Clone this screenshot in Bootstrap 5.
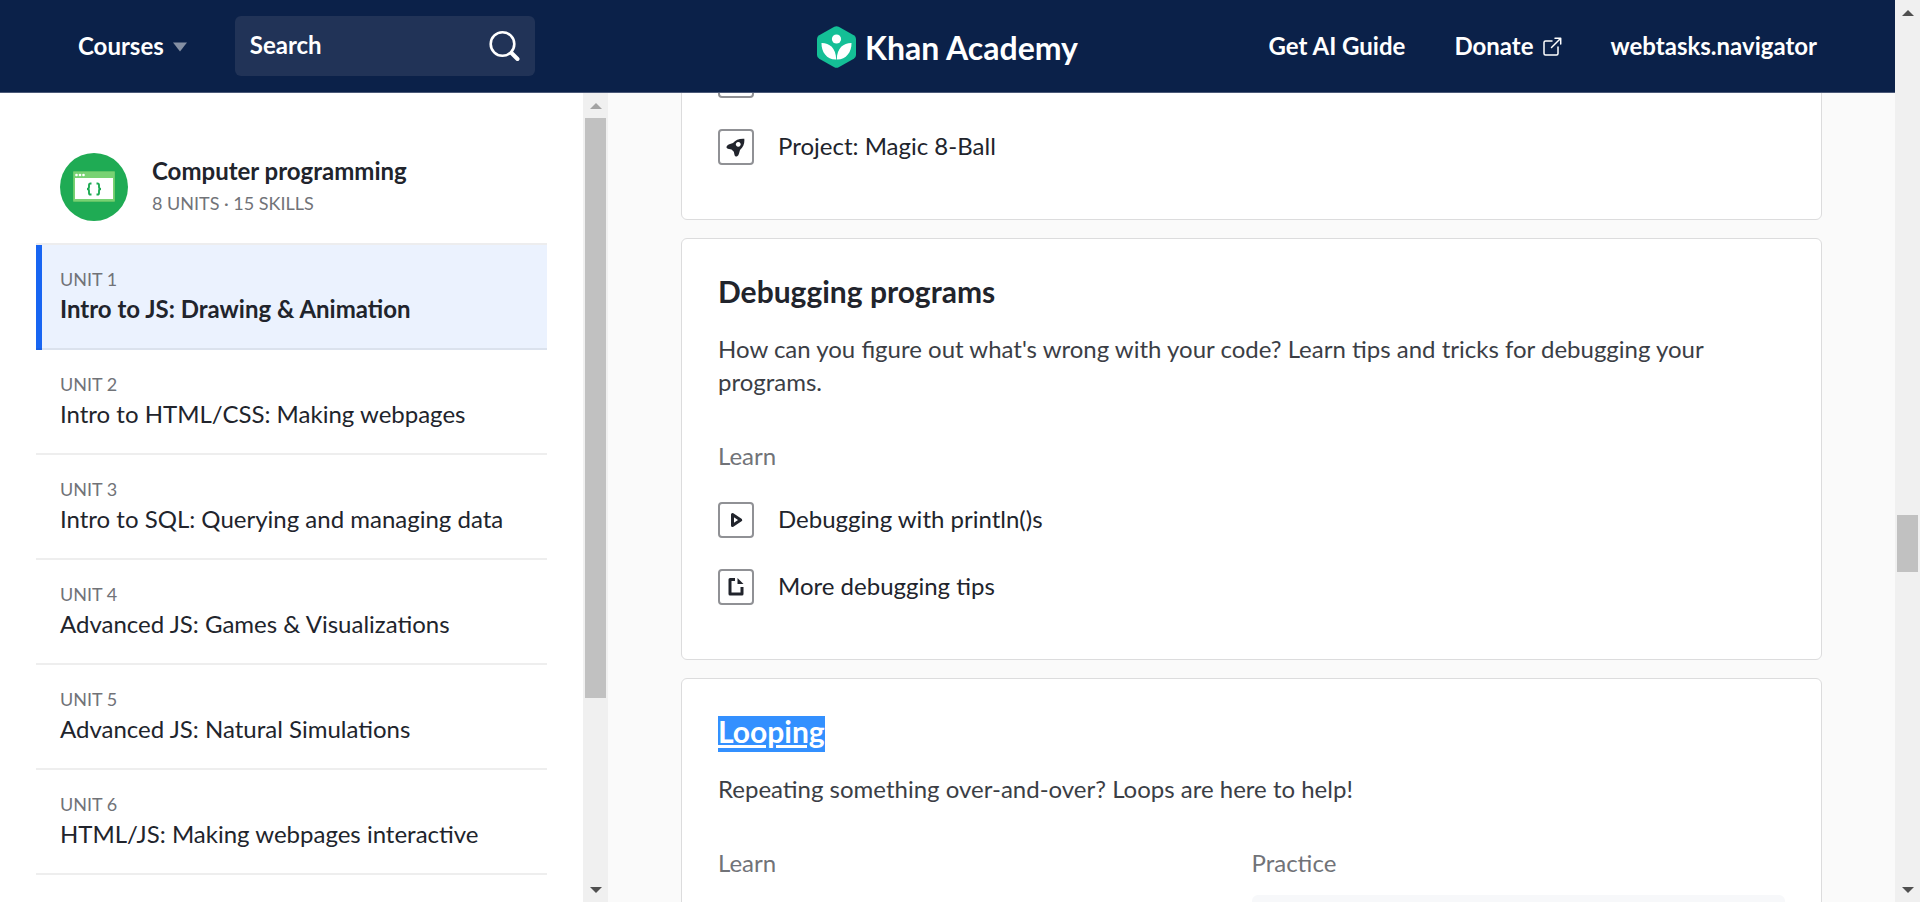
<!DOCTYPE html>
<html lang="en">
<head>
<meta charset="utf-8">
<meta name="viewport" content="width=device-width, initial-scale=1">
<title>Computer programming | Khan Academy</title>
<link href="https://cdn.jsdelivr.net/npm/bootstrap@5.3.0/dist/css/bootstrap.min.css" rel="stylesheet">
<style>
:root { --ink: #21242c; --soft: #717378; --navy: #0b2149; --line: #dcdcdd; }
body { font-family: Lato, "Noto Sans", sans-serif; font-size: 24px; line-height: 33px; color: var(--ink); background: #fafafa; }
a { color: inherit; text-decoration: none; }

/* top bar */
.topbar { background: var(--navy); border-bottom: 1px solid #4b5978; height: 93px; padding: 0 78px; color: #fff; font-weight: 700; }
.topbar .side { flex: 1 1 0; }
.courses-btn { background: none; border: 0; padding: 0 0 2px; color: inherit; font-weight: 700; }
.search-box { background: #213357; border-radius: 6px; width: 300px; height: 60px; padding: 0 15px; margin-left: 47px; }
.search-box input { background: none; border: 0; outline: 0; color: #fff; font-weight: 700; min-width: 0; padding: 0 0 4px; }
.search-box input::placeholder { color: #fff; opacity: 1; }
.search-box button { background: none; border: 0; padding: 0; line-height: 0; }
.brand { font-size: 32px; gap: 9px; padding-top: 2px; }
.links { gap: 49px; padding-bottom: 2px; }

/* sidebar */
.sidebar { width: 583px; background: #fff; padding: 60px 36px 0; }
.course-head { padding: 0 24px 22px; gap: 24px; }
.course-text { padding-top: 3px; }
.course-name { font-weight: 700; line-height: 30px; }
.meta-text { font-size: 18px; line-height: 24px; color: var(--soft); }
.course-head .meta-text { margin-top: 5px; }
.units { border-top: 2px solid #ededee; }
.unit { display: block; height: 105px; padding: 22px 24px 0; border-bottom: 2px solid rgba(33, 36, 44, .08); }
.unit-name { line-height: 36px; }
.unit.current { background: linear-gradient(to right, #1865f2 6px, #ebf2fe 6px) border-box; }
.unit.current .unit-name { font-weight: 700; }

/* scroll tracks */
.track { width: 25px; background: #f0f0f0; }
.track .arrow { height: 25px; }
.track .thumb { background: #c1c1c1; margin: 0 2px; }

/* lessons */
.lessons { padding: 0 73px; }
.lesson { border: 1px solid var(--line); border-radius: 6px; background: #fff; padding: 34px 36px 37px; margin-bottom: 18px; }
.lesson.scrolled { margin-top: -80px; }
.lesson h2 { font-size: 30px; line-height: 36px; font-weight: 700; margin: 0 0 23px; }
.lesson p { margin: 0 0 41px; color: #3b3e45; }
.lesson h3 { font-size: 24px; line-height: 33px; font-weight: 400; color: var(--soft); margin: 0 0 16px; }
.item { height: 67px; gap: 24px; padding-bottom: 4px; }
.item-icon { width: 36px; height: 36px; border: 2px solid #909195; border-radius: 4px; }
.item-name { padding-bottom: 3px; }
.picked { background: linear-gradient(transparent 3px, #3390ff 3px); padding-bottom: 3px; color: #fff; text-decoration: underline; text-decoration-thickness: 3px; }
.practice-box { background: #f7f8fa; border-radius: 6px; height: 120px; }
</style>
</head>
<body class="vh-100 overflow-hidden d-flex">
<div class="flex-grow-1 d-flex flex-column" style="min-width:0">
  <header class="topbar d-flex align-items-center flex-shrink-0">
    <div class="side d-flex align-items-center">
      <button class="courses-btn d-flex align-items-center" type="button">Courses
        <svg class="ms-2 mt-1" width="16" height="10" viewBox="0 0 16 10" aria-hidden="true"><path d="M1 0.5h14L8 9.5z" fill="#8590a4"/></svg>
      </button>
      <form class="search-box d-flex align-items-center" role="search">
        <input class="flex-grow-1" type="text" placeholder="Search" aria-label="Search">
        <button type="button" aria-label="Submit search">
          <svg width="32" height="32" viewBox="0 0 32 32" fill="none" stroke="#fff" stroke-linecap="round"><circle cx="14.500" cy="14" r="11.800" stroke-width="2.600"/><path d="M23.500 23l6 6" stroke-width="4"/></svg>
        </button>
      </form>
    </div>
    <a class="brand d-flex align-items-center" href="#">
      <svg width="39" height="42" viewBox="0 0 39 42" aria-hidden="true">
        <path d="M17.300.800Q19.500-.400 21.700.800L36.800 9.300Q39 10.600 39 13V29Q39 31.400 36.800 32.700L21.700 41.200Q19.500 42.400 17.300 41.200L2.200 32.700Q0 31.400 0 29V13Q0 10.600 2.200 9.300z" fill="#14bf96"/>
        <circle cx="19.500" cy="13" r="4.600" fill="#fff"/>
        <path d="M4.500 17C12 16.800 19.100 21.500 19.200 33.600 10 33.900 4.200 26 4.500 17zM34.500 17C27 16.800 19.900 21.500 19.800 33.600 29 33.900 34.800 26 34.500 17z" fill="#fff"/>
      </svg>
      <span>Khan Academy</span>
    </a>
    <nav class="side links d-flex align-items-center justify-content-end">
      <a href="#">Get AI Guide</a>
      <a class="d-flex align-items-center" href="#">Donate
        <svg class="ms-2 mt-1" width="20" height="20" viewBox="0 0 20 20" fill="none" stroke="#fff" stroke-width="1.500" stroke-linecap="round" stroke-linejoin="round" aria-hidden="true"><path d="M10 4H3.500Q2 4 2 5.500v11Q2 18 3.500 18h11q1.500 0 1.500-1.500V10M9.500 10.500L18.500 1.500M13 1.300h5.700V7"/></svg>
      </a>
      <a href="#">webtasks.navigator</a>
    </nav>
  </header>

  <div class="flex-grow-1 d-flex overflow-hidden">
    <aside class="sidebar flex-shrink-0 overflow-hidden">
      <a class="course-head d-flex" href="#">
        <svg width="68" height="68" viewBox="0 0 68 68" aria-hidden="true">
          <circle cx="34" cy="34" r="34" fill="#1fab54"/>
          <rect x="13" y="18" width="42" height="31" rx="1" fill="#5fc465"/>
          <rect x="13.500" y="19" width="41" height="29" fill="#78d273"/>
          <rect x="15" y="25" width="38" height="21" fill="#fff"/>
          <g fill="#fff"><circle cx="16.500" cy="22" r="1.300"/><circle cx="20" cy="22" r="1.300"/><circle cx="23.500" cy="22" r="1.300"/></g>
          <g fill="none" stroke="#1fab54" stroke-width="1.900"><path d="M31.500 30.500h-1q-1.500 0-1.500 1.600v2q0 1.900-2 1.900 2 0 2 1.900v2q0 1.600 1.500 1.600h1M36.500 30.500h1q1.500 0 1.500 1.600v2q0 1.900 2 1.900-2 0-2 1.900v2q0 1.600-1.500 1.600h-1"/></g>
        </svg>
        <span class="course-text d-flex flex-column">
          <span class="course-name">Computer programming</span>
          <span class="meta-text">8 UNITS · 15 SKILLS</span>
        </span>
      </a>
      <nav class="units" aria-label="Units">
        <a class="unit current" href="#"><div class="meta-text">UNIT 1</div><div class="unit-name">Intro to JS: Drawing &amp; Animation</div></a>
        <a class="unit" href="#"><div class="meta-text">UNIT 2</div><div class="unit-name">Intro to HTML/CSS: Making webpages</div></a>
        <a class="unit" href="#"><div class="meta-text">UNIT 3</div><div class="unit-name">Intro to SQL: Querying and managing data</div></a>
        <a class="unit" href="#"><div class="meta-text">UNIT 4</div><div class="unit-name">Advanced JS: Games &amp; Visualizations</div></a>
        <a class="unit" href="#"><div class="meta-text">UNIT 5</div><div class="unit-name">Advanced JS: Natural Simulations</div></a>
        <a class="unit" href="#"><div class="meta-text">UNIT 6</div><div class="unit-name">HTML/JS: Making webpages interactive</div></a>
      </nav>
    </aside>
    <div class="track d-flex flex-column flex-shrink-0" aria-hidden="true">
      <div class="arrow d-flex align-items-center justify-content-center"><svg width="12" height="6"><path d="M6 0l6 6H0z" fill="#a3a3a3"/></svg></div>
      <div class="thumb" style="flex:580 0 0"></div>
      <div style="flex:179 0 0"></div>
      <div class="arrow d-flex align-items-center justify-content-center"><svg width="12" height="6"><path d="M0 0h12L6 6z" fill="#505050"/></svg></div>
    </div>

    <main class="lessons flex-grow-1 overflow-hidden">
      <section class="lesson scrolled">
        <div class="item d-flex align-items-center">
          <span class="item-icon"></span>
        </div>
        <a class="item d-flex align-items-center" href="#">
          <span class="item-icon d-flex align-items-center justify-content-center"><svg width="20" height="20" viewBox="0 0 20 20" aria-hidden="true"><path fill-rule="evenodd" d="M18.300 1.700C18.700 6 17.700 9.500 14 13L13 16.500Q12.500 18.500 11.200 19.300 9.200 20.200 8.600 18.300L7.800 14.800 5.500 12.400 1.800 11.700Q-.200 10.900.800 9.200 1.600 8 3.300 7.300L7 6C9.500 2.700 13.500 1.400 18.300 1.700zM12.200 5a2.400 2.400 0 1 0 .1 0z" fill="#21242c"/></svg></span>
          <span class="item-name">Project: Magic 8-Ball</span>
        </a>
      </section>

      <section class="lesson">
        <h2><a href="#">Debugging programs</a></h2>
        <p>How can you figure out what's wrong with your code? Learn tips and tricks for debugging your programs.</p>
        <h3>Learn</h3>
        <a class="item d-flex align-items-center" href="#">
          <span class="item-icon d-flex align-items-center justify-content-center"><svg width="20" height="20" viewBox="0 0 20 20" aria-hidden="true"><path d="M6.500 4.500v11L14.700 10z" fill="none" stroke="#21242c" stroke-width="3" stroke-linejoin="round"/></svg></span>
          <span class="item-name">Debugging with println()s</span>
        </a>
        <a class="item d-flex align-items-center" href="#">
          <span class="item-icon d-flex align-items-center justify-content-center"><svg width="20" height="20" viewBox="0 0 20 20" aria-hidden="true"><path d="M9 2.500H4v14.500h12V10" fill="none" stroke="#21242c" stroke-width="3" stroke-linejoin="round"/><path d="M11.500 1l6 6h-6z" fill="#21242c"/></svg></span>
          <span class="item-name">More debugging tips</span>
        </a>
      </section>

      <section class="lesson">
        <h2><a class="picked" href="#">Looping</a></h2>
        <p>Repeating something over-and-over? Loops are here to help!</p>
        <div class="row gx-0">
          <div class="col-6"><h3>Learn</h3></div>
          <div class="col-6"><h3>Practice</h3><div class="practice-box"></div></div>
        </div>
      </section>
    </main>
  </div>
</div>
<div class="track d-flex flex-column flex-shrink-0" aria-hidden="true">
  <div class="arrow d-flex align-items-center justify-content-center"><svg width="12" height="6"><path d="M6 0l6 6H0z" fill="#505050"/></svg></div>
  <div style="flex:490 0 0"></div>
  <div class="thumb" style="flex:57 0 0"></div>
  <div style="flex:305 0 0"></div>
  <div class="arrow d-flex align-items-center justify-content-center"><svg width="12" height="6"><path d="M0 0h12L6 6z" fill="#505050"/></svg></div>
</div>
<script src="https://cdn.jsdelivr.net/npm/bootstrap@5.3.0/dist/js/bootstrap.bundle.min.js"></script>
</body>
</html>
